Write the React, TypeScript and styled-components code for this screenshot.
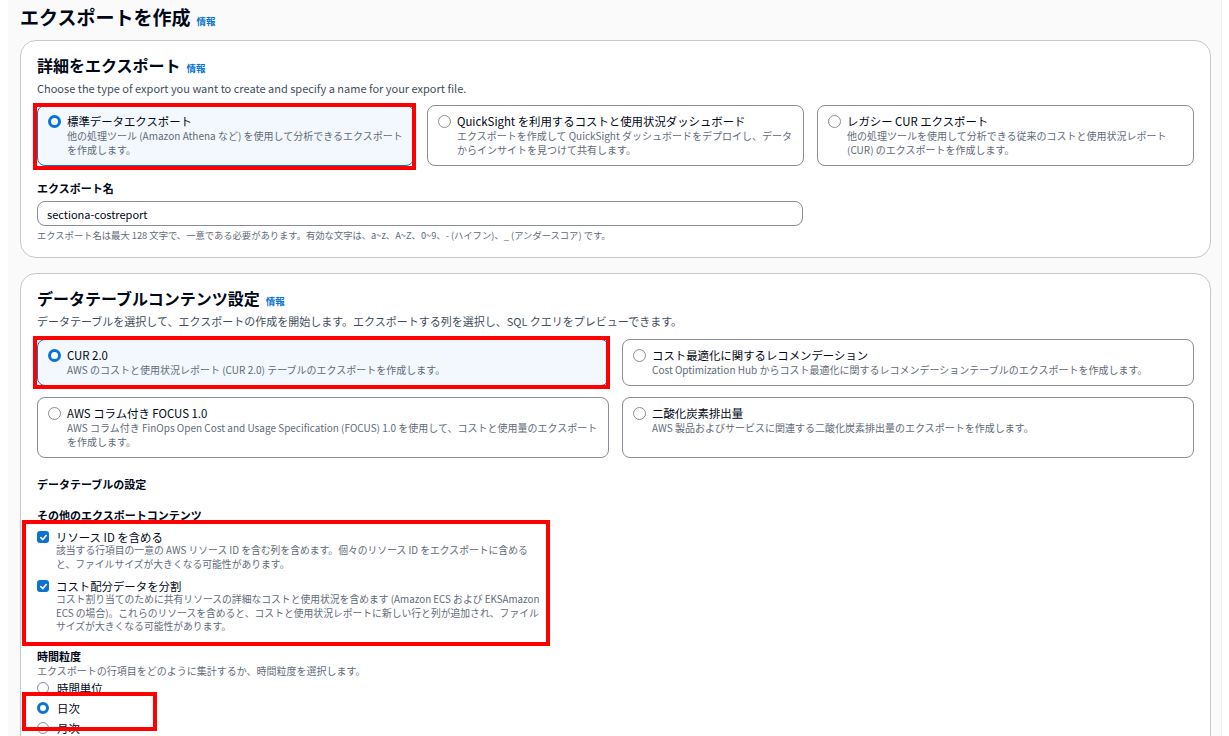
import styled, { createGlobalStyle } from 'styled-components';

const GlobalStyle = createGlobalStyle`
  html, body {
    margin: 0;
    padding: 0;
    background: #ffffff;
  }
  body {
    font-family: 'Noto Sans CJK JP', 'Noto Sans', sans-serif;
    color: #000716;
  }
`;

const Root = styled.div`
  position: relative;
  width: 1229px;
  height: 736px;
  overflow: hidden;
`;

const Page = styled.div`
  margin: 0 7px 0 8px;
  padding: 4px 10px 0 12px;
  background: #fafafa;
  min-height: 736px;
  box-sizing: border-box;
  border-right: 1px solid #ececec;
`;

const PageTitle = styled.h1`
  display: flex;
  align-items: baseline;
  gap: 6px;
  height: 26px;
  margin: 0 0 10px;
  font-size: 19px;
  line-height: 26px;
  font-weight: 700;
`;

const InfoLink = styled.a`
  font-size: 9.5px;
  line-height: 12px;
  font-weight: 700;
  color: #0972d3;
  text-decoration: none;
  cursor: pointer;
`;

const Card = styled.section`
  background: #ffffff;
  border: 1px solid #c6c6cd;
  border-radius: 16px;
  padding: 13px 16px 15px;
  & + & {
    margin-top: 15px;
  }
`;

const CardTitle = styled.h2`
  display: flex;
  align-items: baseline;
  gap: 6px;
  height: 22px;
  margin: 0;
  font-size: 16px;
  line-height: 22px;
  font-weight: 700;
`;

const CardDesc = styled.p`
  margin: 4px 0 0;
  font-size: 11px;
  line-height: 16px;
  color: #414d5c;
`;

const TileGrid = styled.div<{ cols: number; top?: number }>`
  display: grid;
  grid-template-columns: repeat(${(p) => p.cols}, 1fr);
  gap: 11px 13px;
  margin-top: ${(p) => p.top ?? 10}px;
`;

const Tile = styled.label<{ selected?: boolean }>`
  display: grid;
  grid-template-columns: 13px 1fr;
  column-gap: 6px;
  align-items: start;
  padding: 7px 10px 8px;
  border-radius: 8px;
  border: 1px solid ${(p) => (p.selected ? '#0972d3' : '#8c8c94')};
  background: ${(p) => (p.selected ? '#f2f8fd' : '#ffffff')};
  cursor: pointer;
`;

const RadioDot = styled.span<{ checked?: boolean; size?: number }>`
  display: inline-block;
  box-sizing: border-box;
  flex: none;
  width: ${(p) => p.size ?? 13}px;
  height: ${(p) => p.size ?? 13}px;
  margin-top: 1.5px;
  border-radius: 50%;
  background: #ffffff;
  border: ${(p) => (p.checked ? '3.5px solid #0972d3' : '1.3px solid #8c8c94')};
`;

const TileTitle = styled.div`
  font-size: 11.4px;
  line-height: 16px;
  color: #000716;
`;

const TileDesc = styled.div`
  font-size: 10px;
  line-height: 14px;
  color: #5f6b7a;
`;

const Field = styled.div`
  margin-top: 14px;
`;

const FieldLabel = styled.div`
  font-size: 11px;
  line-height: 16px;
  font-weight: 700;
`;

const TextInput = styled.input`
  display: block;
  width: 66.2%;
  height: 25px;
  margin-top: 5px;
  padding: 0 9px;
  box-sizing: border-box;
  border: 1px solid #8c8c94;
  border-radius: 8px;
  font-family: inherit;
  font-size: 11px;
  color: #000716;
  background: #ffffff;
`;

const Hint = styled.div`
  margin-top: 2px;
  font-size: 9.3px;
  line-height: 14px;
  color: #5f6b7a;
`;

const SubHeading = styled.div<{ top: number }>`
  margin-top: ${(p) => p.top}px;
  font-size: 11px;
  line-height: 16px;
  font-weight: 700;
`;

const CheckList = styled.div`
  display: flex;
  flex-direction: column;
  gap: 8px;
  margin-top: 7px;
`;

const CheckRow = styled.label`
  display: grid;
  grid-template-columns: 12px auto;
  justify-content: start;
  column-gap: 7px;
  align-items: start;
`;

const CheckBox = styled.span`
  display: flex;
  align-items: center;
  justify-content: center;
  width: 12px;
  height: 12px;
  margin-top: 1px;
  border-radius: 3px;
  background: #0972d3;
`;

const CheckTitle = styled.div`
  font-size: 11.4px;
  line-height: 14px;
`;

const CheckDesc = styled.div`
  font-size: 9.8px;
  line-height: 13.5px;
  color: #5f6b7a;
  white-space: nowrap;
`;

const GroupDesc = styled.div`
  font-size: 10px;
  line-height: 14px;
  color: #5f6b7a;
`;

const RadioList = styled.div`
  display: flex;
  flex-direction: column;
`;

const RadioRow = styled.label`
  display: flex;
  align-items: center;
  gap: 8px;
  height: 20px;
  font-size: 11.4px;
  line-height: 20px;
`;

const Highlight = styled.div`
  position: absolute;
  border: 4px solid #ff0000;
  box-sizing: border-box;
  pointer-events: none;
`;

type TileItem = { title: string; desc: string; selected?: boolean };

const exportTypes: TileItem[] = [
  {
    title: '標準データエクスポート',
    desc: '他の処理ツール (Amazon Athena など) を使用して分析できるエクスポートを作成します。',
    selected: true,
  },
  {
    title: 'QuickSight を利用するコストと使用状況ダッシュボード',
    desc: 'エクスポートを作成して QuickSight ダッシュボードをデプロイし、データからインサイトを見つけて共有します。',
  },
  {
    title: 'レガシー CUR エクスポート',
    desc: '他の処理ツールを使用して分析できる従来のコストと使用状況レポート (CUR) のエクスポートを作成します。',
  },
];

const tables: TileItem[] = [
  {
    title: 'CUR 2.0',
    desc: 'AWS のコストと使用状況レポート (CUR 2.0) テーブルのエクスポートを作成します。',
    selected: true,
  },
  {
    title: 'コスト最適化に関するレコメンデーション',
    desc: 'Cost Optimization Hub からコスト最適化に関するレコメンデーションテーブルのエクスポートを作成します。',
  },
  {
    title: 'AWS コラム付き FOCUS 1.0',
    desc: 'AWS コラム付き FinOps Open Cost and Usage Specification (FOCUS) 1.0 を使用して、コストと使用量のエクスポートを作成します。',
  },
  {
    title: '二酸化炭素排出量',
    desc: 'AWS 製品およびサービスに関連する二酸化炭素排出量のエクスポートを作成します。',
  },
];

const extraContents = [
  {
    title: 'リソース ID を含める',
    lines: [
      '該当する行項目の一意の AWS リソース ID を含む列を含めます。個々のリソース ID をエクスポートに含める',
      'と、ファイルサイズが大きくなる可能性があります。',
    ],
  },
  {
    title: 'コスト配分データを分割',
    lines: [
      'コスト割り当てのために共有リソースの詳細なコストと使用状況を含めます (Amazon ECS および EKSAmazon',
      'ECS の場合)。これらのリソースを含めると、コストと使用状況レポートに新しい行と列が追加され、ファイル',
      'サイズが大きくなる可能性があります。',
    ],
  },
];

const granularity = [
  { label: '時間単位', checked: false },
  { label: '日次', checked: true },
  { label: '月次', checked: false },
];

const CheckMark = () => (
  <svg width="9" height="9" viewBox="0 0 10 10">
    <path d="M2 5.2 L4.2 7.3 L8 2.8" fill="none" stroke="#fff" strokeWidth="1.8" strokeLinecap="round" strokeLinejoin="round" />
  </svg>
);

const TileOption = ({ item }: { item: TileItem }) => (
  <Tile selected={item.selected}>
    <RadioDot checked={item.selected} />
    <div>
      <TileTitle>{item.title}</TileTitle>
      <TileDesc>{item.desc}</TileDesc>
    </div>
  </Tile>
);

export default function App() {
  return (
    <Root>
      <GlobalStyle />
      <Page>
        <PageTitle>
          エクスポートを作成 <InfoLink>情報</InfoLink>
        </PageTitle>

        <Card>
          <CardTitle>
            詳細をエクスポート <InfoLink>情報</InfoLink>
          </CardTitle>
          <CardDesc>Choose the type of export you want to create and specify a name for your export file.</CardDesc>
          <TileGrid cols={3} top={9}>
            {exportTypes.map((t) => (
              <TileOption key={t.title} item={t} />
            ))}
          </TileGrid>
          <Field>
            <FieldLabel>エクスポート名</FieldLabel>
            <TextInput defaultValue="sectiona-costreport" />
            <Hint>
              エクスポート名は最大 128 文字で、一意である必要があります。有効な文字は、a~z、A~Z、0~9、- (ハイフン)、_ (アンダースコア) です。
            </Hint>
          </Field>
        </Card>

        <Card>
          <CardTitle>
            データテーブルコンテンツ設定 <InfoLink>情報</InfoLink>
          </CardTitle>
          <CardDesc>
            データテーブルを選択して、エクスポートの作成を開始します。エクスポートする列を選択し、SQL クエリをプレビューできます。
          </CardDesc>
          <TileGrid cols={2}>
            {tables.map((t) => (
              <TileOption key={t.title} item={t} />
            ))}
          </TileGrid>

          <SubHeading top={18}>データテーブルの設定</SubHeading>
          <SubHeading top={15}>その他のエクスポートコンテンツ</SubHeading>
          <CheckList>
            {extraContents.map((c) => (
              <CheckRow key={c.title}>
                <CheckBox>
                  <CheckMark />
                </CheckBox>
                <div>
                  <CheckTitle>{c.title}</CheckTitle>
                  <CheckDesc>
                    {c.lines.map((l, i) => (
                      <span key={i}>
                        {i > 0 && <br />}
                        {l}
                      </span>
                    ))}
                  </CheckDesc>
                </div>
              </CheckRow>
            ))}
          </CheckList>

          <SubHeading top={14}>時間粒度</SubHeading>
          <GroupDesc>エクスポートの行項目をどのように集計するか、時間粒度を選択します。</GroupDesc>
          <RadioList>
            {granularity.map((g) => (
              <RadioRow key={g.label}>
                <RadioDot checked={g.checked} size={12} />
                {g.label}
              </RadioRow>
            ))}
          </RadioList>
        </Card>
      </Page>

      <Highlight style={{ left: 33, top: 103, width: 383, height: 67 }} />
      <Highlight style={{ left: 33, top: 336, width: 577, height: 53 }} />
      <Highlight style={{ left: 22, top: 520, width: 528, height: 126 }} />
      <Highlight style={{ left: 22, top: 692, width: 135, height: 39 }} />
    </Root>
  );
}
